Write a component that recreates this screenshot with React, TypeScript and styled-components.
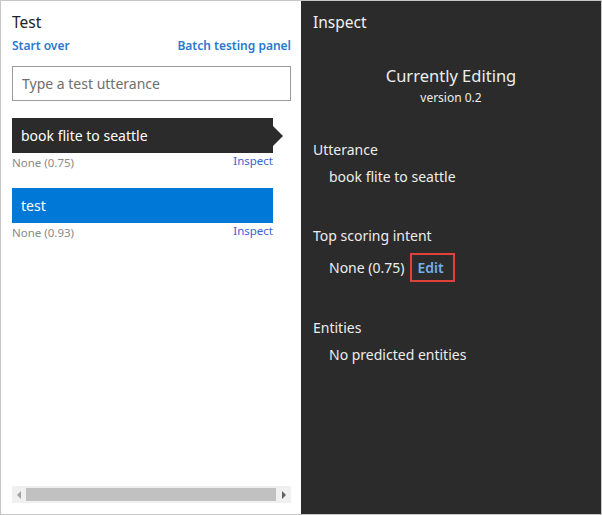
import styled, { createGlobalStyle } from "styled-components";

const GlobalStyle = createGlobalStyle`
  html, body {
    margin: 0;
    padding: 0;
    background: #ffffff;
  }
  body {
    font-family: "Noto Sans", "Open Sans", sans-serif;
  }
`;

const Frame = styled.div`
  width: 602px;
  height: 515px;
  box-sizing: border-box;
  border: 1px solid #c6c6c6;
  display: grid;
  grid-template-columns: 300px 300px;
`;

const TestPanel = styled.div`
  background: #ffffff;
  display: flex;
  flex-direction: column;
  padding: 10px 10px 11px 11px;
`;

const PanelTitle = styled.div<{ dark?: boolean }>`
  font-size: 15.5px;
  line-height: 22px;
  color: ${(p) => (p.dark ? "#f0f0f0" : "#222222")};
`;

const LinkRow = styled.div`
  display: flex;
  justify-content: space-between;
  margin-top: 4px;
`;

const ActionLink = styled.a`
  font-size: 12px;
  font-weight: 600;
  color: #2a78cf;
  line-height: 17px;
  cursor: pointer;
`;

const UtteranceInput = styled.input`
  margin-top: 12px;
  height: 35px;
  box-sizing: border-box;
  border: 1px solid #9a9a9a;
  padding: 0 9px;
  font-family: inherit;
  font-size: 14px;
  color: #333;
  outline: none;
  &::placeholder {
    color: #6e6e6e;
  }
`;

const ResultList = styled.div`
  margin-top: 17px;
  display: flex;
  flex-direction: column;
  gap: 16px;
`;

const Result = styled.div`
  display: flex;
  flex-direction: column;
  width: 261px;
`;

const ResultBar = styled.div<{ selected?: boolean }>`
  position: relative;
  height: 35px;
  display: flex;
  align-items: center;
  padding-left: 9px;
  font-size: 14px;
  color: #ffffff;
  background: ${(p) => (p.selected ? "#2b2b2b" : "#0078d7")};
  &::after {
    content: "";
    display: ${(p) => (p.selected ? "block" : "none")};
    position: absolute;
    right: -10px;
    top: 8px;
    border-top: 10px solid transparent;
    border-bottom: 10px solid transparent;
    border-left: 10px solid #2b2b2b;
  }
`;

const ResultMeta = styled.div`
  display: flex;
  justify-content: space-between;
  align-items: flex-start;
  height: 19px;
`;

const Score = styled.span`
  font-size: 11.5px;
  color: #8a8a8a;
  line-height: 19px;
`;

const InspectLink = styled.a`
  font-size: 11.5px;
  color: #3c62d4;
  line-height: 15px;
  cursor: pointer;
`;

const Scrollbar = styled.div`
  margin-top: auto;
  height: 17px;
  width: 279px;
  background: #f0f0f0;
  display: flex;
  align-items: center;
  justify-content: space-between;
  padding: 0 5px;
  box-sizing: border-box;
`;

const Thumb = styled.div`
  flex: 1;
  height: 13px;
  background: #c1c1c1;
  margin: 0 6px 0 5px;
`;

const Arrow = styled.div<{ right?: boolean }>`
  width: 0;
  height: 0;
  border-top: 4px solid transparent;
  border-bottom: 4px solid transparent;
  ${(p) =>
    p.right
      ? "border-left: 4px solid #606060;"
      : "border-right: 4px solid #a3a3a3;"}
`;

const InspectPanel = styled.div`
  background: #2b2b2b;
  color: #ededed;
  display: flex;
  flex-direction: column;
  padding: 10px 12px 0 12px;
`;

const EditingBlock = styled.div`
  margin-top: 32px;
  display: flex;
  flex-direction: column;
  align-items: center;
`;

const EditingTitle = styled.div`
  font-size: 16.5px;
  line-height: 22px;
`;

const EditingVersion = styled.div`
  font-size: 12px;
  line-height: 18px;
  margin-top: 2px;
`;

const Section = styled.div<{ gap: number }>`
  margin-top: ${(p) => p.gap}px;
`;

const SectionLabel = styled.div`
  font-size: 14px;
  line-height: 20px;
`;

const SectionValue = styled.div`
  margin-top: 7px;
  padding-left: 16px;
  font-size: 14px;
  line-height: 20px;
  display: flex;
  align-items: center;
  gap: 6px;
`;

const EditButton = styled.span`
  border: 2px solid #e2403a;
  padding: 3px 9px 3px 5px;
  font-weight: 600;
  color: #72b0ee;
  line-height: 19px;
  cursor: pointer;
`;

export default function App() {
  return (
    <>
      <GlobalStyle />
      <Frame>
        <TestPanel>
          <PanelTitle>Test</PanelTitle>
          <LinkRow>
            <ActionLink>Start over</ActionLink>
            <ActionLink>Batch testing panel</ActionLink>
          </LinkRow>
          <UtteranceInput placeholder="Type a test utterance" />
          <ResultList>
            <Result>
              <ResultBar selected>book flite to seattle</ResultBar>
              <ResultMeta>
                <Score>None (0.75)</Score>
                <InspectLink>Inspect</InspectLink>
              </ResultMeta>
            </Result>
            <Result>
              <ResultBar>test</ResultBar>
              <ResultMeta>
                <Score>None (0.93)</Score>
                <InspectLink>Inspect</InspectLink>
              </ResultMeta>
            </Result>
          </ResultList>
          <Scrollbar>
            <Arrow />
            <Thumb />
            <Arrow right />
          </Scrollbar>
        </TestPanel>
        <InspectPanel>
          <PanelTitle dark>Inspect</PanelTitle>
          <EditingBlock>
            <EditingTitle>Currently Editing</EditingTitle>
            <EditingVersion>version 0.2</EditingVersion>
          </EditingBlock>
          <Section gap={33}>
            <SectionLabel>Utterance</SectionLabel>
            <SectionValue>book flite to seattle</SectionValue>
          </Section>
          <Section gap={39}>
            <SectionLabel>Top scoring intent</SectionLabel>
            <SectionValue>
              None (0.75)
              <EditButton>Edit</EditButton>
            </SectionValue>
          </Section>
          <Section gap={36}>
            <SectionLabel>Entities</SectionLabel>
            <SectionValue>No predicted entities</SectionValue>
          </Section>
        </InspectPanel>
      </Frame>
    </>
  );
}
